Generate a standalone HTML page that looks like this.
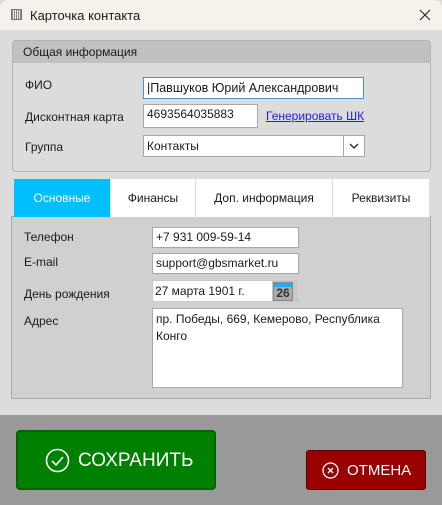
<!DOCTYPE html>
<html><head><meta charset="utf-8"><style>
*{box-sizing:border-box;margin:0;padding:0}
body{width:442px;height:505px;overflow:hidden;background:#dcdcdc;font-family:"Liberation Sans","DejaVu Sans",sans-serif;font-size:12px;color:#1a1a1a;position:relative}
.a{position:absolute}
.in{position:absolute;background:#fff;border:1px solid #a8a8a8;padding:0 3px;font-size:12px;white-space:nowrap}
.lbl{position:absolute;font-size:12px}
.tab{position:absolute;top:179px;height:38px;background:#fff;border-right:1px solid #ddd;text-align:center;line-height:38px;font-size:12px}
</style></head><body>
<div class="a" style="left:0;top:0;width:442px;height:30px;background:#f4f2ea;border-radius:8px 8px 0 0"></div>
<div class="a" style="left:11px;top:9px;width:11px;height:11px;border:1px solid #777;background:repeating-linear-gradient(90deg,#888 0 1px,#eee 1px 2px)"></div>
<div class="a" style="left:30px;top:8px;font-size:13px">Карточка контакта</div>
<svg class="a" style="left:419px;top:9px" width="12" height="12" viewBox="0 0 12 12"><path d="M1 1l10 10M11 1L1 11" stroke="#222" stroke-width="1.1"/></svg>

<div class="a" style="left:12px;top:40px;width:419px;height:132px;border:1px solid #b4b4b4;border-radius:4px;overflow:hidden">
<div style="height:22px;background:#c0c0c0;padding:4px 10px;font-size:12px">Общая информация</div></div>
<div class="lbl" style="left:25px;top:78px">ФИО</div>
<div class="in" style="left:143px;top:77px;width:221px;height:22px;line-height:20px;border-color:#4a90d9;font-size:12.5px">|Павшуков Юрий Александрович</div>
<div class="lbl" style="left:25px;top:110px">Дисконтная карта</div>
<div class="in" style="left:143px;top:104px;width:115px;height:24px;line-height:18px">4693564035883</div>
<div class="a" style="left:266px;top:109px;color:#2222dd;text-decoration:underline">Генерировать ШК</div>
<div class="lbl" style="left:25px;top:140px">Группа</div>
<div class="in" style="left:143px;top:135px;width:222px;height:22px;line-height:21px">Контакты</div>
<svg class="a" style="left:349px;top:142px" width="10" height="8" viewBox="0 0 10 8"><path d="M1 2l4 4 4-4" fill="none" stroke="#222" stroke-width="1.3"/></svg>
<div class="a" style="left:343px;top:135px;width:1px;height:22px;background:#a8a8a8"></div>

<div class="a" style="left:11px;top:216px;width:420px;height:183px;background:#d0d0d0;border:1px solid #a8a8a8"></div>
<div class="tab" style="left:14px;width:97px;background:#00bfff;color:#fff">Основные</div>
<div class="tab" style="left:111px;width:85px">Финансы</div>
<div class="tab" style="left:196px;width:137px">Доп. информация</div>
<div class="tab" style="left:333px;width:97px">Реквизиты</div>

<div class="lbl" style="left:24px;top:230px">Телефон</div>
<div class="in" style="left:152px;top:227px;width:147px;height:21px;line-height:19px">+7 931 009-59-14</div>
<div class="lbl" style="left:24px;top:255px">E-mail</div>
<div class="in" style="left:152px;top:253px;width:147px;height:21px;line-height:19px">support@gbsmarket.ru</div>
<div class="lbl" style="left:24px;top:287px">День рождения</div>
<div class="a" style="left:152px;top:280px;width:146px;height:22px;background:#c8c8c8"></div>
<div class="in" style="left:153px;top:281px;width:119px;height:20px;border:none;padding:0 2px;line-height:20px">27 марта 1901 г.</div>
<div class="a" style="left:273px;top:282px;width:20px;height:19px;background:#aaa;border:1px solid #888"><div style="height:4px;background:#1ab0ff"></div><div style="font-size:12px;text-align:center;line-height:13px;color:#333;font-weight:bold">26</div></div>
<div class="lbl" style="left:24px;top:314px">Адрес</div>
<div class="in" style="left:152px;top:308px;width:251px;height:80px;white-space:normal;line-height:17px;padding-top:2px">пр. Победы, 669, Кемерово, Республика Конго</div>

<div class="a" style="left:0;top:415px;width:442px;height:90px;background:#999"></div>
<div class="a" style="left:16px;top:430px;width:200px;height:60px;background:#008000;border:2px solid #006400;border-radius:4px;color:#fff;font-size:19px">
<svg class="a" style="left:27px;top:16px" width="25" height="25" viewBox="0 0 25 25"><circle cx="12.5" cy="12.5" r="11" fill="none" stroke="#fff" stroke-width="1.6"/><path d="M7 13l4 4 7-8" fill="none" stroke="#fff" stroke-width="1.6"/></svg>
<div class="a" style="left:60px;top:18px">СОХРАНИТЬ</div></div>
<div class="a" style="left:306px;top:450px;width:120px;height:40px;background:#990000;border:1px solid #5a0000;border-radius:3px;color:#fff;font-size:15px">
<svg class="a" style="left:15px;top:11px" width="17" height="17" viewBox="0 0 17 17"><circle cx="8.5" cy="8.5" r="7.5" fill="none" stroke="#fff" stroke-width="1.3"/><path d="M6 6l5 5M11 6l-5 5" stroke="#fff" stroke-width="1.3"/></svg>
<div class="a" style="left:40px;top:11px">ОТМЕНА</div></div>
</body></html>
